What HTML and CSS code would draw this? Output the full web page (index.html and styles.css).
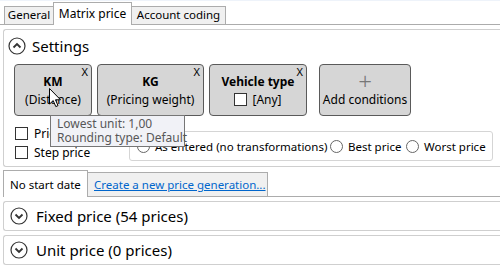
FILE: index.html
```html
<!DOCTYPE html>
<html lang="en">
  <head>
    <meta charset="UTF-8" />
    <meta name="viewport" content="width=device-width, initial-scale=1.0" />
    <title>Matrix price</title>
    <link rel="stylesheet" href="styles.css">
  </head>
  <body>
    <div class="tabs">
      <div class="tab tab-general">General</div>
      <div class="tab tab-active">Matrix price</div>
      <div class="tab tab-account">Account coding</div>
    </div>

    <div class="panel settings">
      <div class="panel-head">
        <svg class="toggle" width="18" height="18" viewBox="0 0 18 18">
          <circle cx="9" cy="9" r="8" fill="none" stroke="#333" stroke-width="1.2" />
          <path d="M5.5 10.5 L9 7 L12.5 10.5" fill="none" stroke="#333" stroke-width="1.8" />
        </svg>
        <span>Settings</span>
      </div>

      <div class="conditions">
        <div class="cond cond-km">
          <span class="cond-x">X</span>
          <b>KM</b>
          <span>(Distance)</span>
        </div>
        <div class="cond cond-kg">
          <span class="cond-x">X</span>
          <b>KG</b>
          <span>(Pricing weight)</span>
        </div>
        <div class="cond cond-vehicle">
          <span class="cond-x">X</span>
          <b>Vehicle type</b>
          <span class="any"><i class="box"></i>[Any]</span>
        </div>
        <div class="cond cond-add">
          <span class="plus">+</span>
          <span>Add conditions</span>
        </div>
      </div>

      <div class="options">
        <div class="checks">
          <label><i class="box"></i>Price per unit</label>
          <label><i class="box"></i>Step price</label>
        </div>
        <div class="radios">
          <label class="r-entered"><i class="radio"></i>As entered (no transformations)</label>
          <label class="r-best"><i class="radio"></i>Best price</label>
          <label><i class="radio"></i>Worst price</label>
        </div>
      </div>
    </div>

    <div class="subtabs">
      <div class="subtab subtab-active">No start date</div>
      <div class="subtab subtab-new"><a href="#">Create a new price generation...</a></div>
    </div>

    <div class="panel section">
      <svg class="toggle" width="18" height="18" viewBox="0 0 18 18">
        <circle cx="9" cy="9" r="8" fill="none" stroke="#333" stroke-width="1.2" />
        <path d="M5.5 7.5 L9 11 L12.5 7.5" fill="none" stroke="#333" stroke-width="1.8" />
      </svg>
      <span>Fixed price (54 prices)</span>
    </div>
    <div class="panel section">
      <svg class="toggle" width="18" height="18" viewBox="0 0 18 18">
        <circle cx="9" cy="9" r="8" fill="none" stroke="#333" stroke-width="1.2" />
        <path d="M5.5 7.5 L9 11 L12.5 7.5" fill="none" stroke="#333" stroke-width="1.8" />
      </svg>
      <span>Unit price (0 prices)</span>
    </div>

    <!-- hover tooltip over the KM condition -->
    <div class="tooltip">
      Lowest unit: 1,00<br />
      Rounding type: Default
    </div>
    <svg class="cursor" width="13" height="20" viewBox="0 0 13 20">
      <path d="M0.5 0.5 L0.5 16 L4.2 12.6 L6.8 18.6 L9 17.6 L6.5 11.8 L11.5 11.8 Z" fill="#fff" stroke="#000" stroke-width="1" stroke-linejoin="round" />
    </svg>
  </body>
</html>
```

FILE: styles.css
```css
body {
  margin: 0;
  background-color: white;
  color: black;
  font-family: "Noto Sans", "Open Sans", sans-serif;
  font-size: 11.5px;
  white-space: nowrap;
  overflow: hidden;
  position: relative;
  height: 267px;
}
.tabs {
  display: flex;
  align-items: flex-end;
  padding-left: 5px;
  border-bottom: 1px solid #acacac;
  border-top: 1px solid #eef3fa;
  box-sizing: border-box;
  height: 25px;
}
.tab {
  height: 17px;
  line-height: 16px;
  text-align: center;
  background-color: #f0f0f0;
  border: 1px solid #acacac;
  border-bottom: none;
  margin-left: -1px;
}
.tab-general { width: 48px; }
.tab-account { width: 93px; }
.tab-active {
  width: 77px;
  height: 22px;
  line-height: 21px;
  background-color: white;
  margin-bottom: -1px;
  font-size: 12px;
}
.panel {
  margin-left: 3px;
  border: 1px solid #cfcfcf;
  border-right: none;
  border-radius: 3px 0 0 3px;
}
.settings {
  margin-top: 4px;
  height: 136px;
}
.panel-head {
  display: flex;
  align-items: center;
  gap: 6px;
  height: 32px;
  padding-left: 4px;
  font-size: 15px;
}
.toggle {
  flex: none;
}
.conditions {
  display: flex;
  gap: 5px;
  padding-left: 10px;
  margin-top: 2px;
}
.cond {
  position: relative;
  display: flex;
  flex-direction: column;
  align-items: center;
  justify-content: center;
  height: 49px;
  padding-top: 1px;
  background-color: #d6d6d6;
  border: 1px solid #5a5a5a;
  border-radius: 4px;
  line-height: 18px;
  font-size: 12px;
}
.cond b {
  font-weight: 700;
}
.cond-km { width: 76px; }
.cond-kg { width: 105px; }
.cond-vehicle { width: 96px; }
.cond-add {
  width: 90px;
  margin-left: 7px;
}
.cond-x {
  position: absolute;
  top: 0;
  right: 3px;
  font-size: 11px;
  line-height: 13px;
}
.plus {
  font-size: 24px;
  line-height: 16px;
  margin-bottom: 2px;
  color: #777;
  font-weight: 300;
}
.any {
  display: flex;
  align-items: center;
  gap: 5px;
}
.box {
  display: inline-block;
  width: 11px;
  height: 11px;
  border: 1px solid #333;
  background-color: white;
}
.options {
  display: flex;
  margin-top: 10px;
}
.checks {
  display: flex;
  flex-direction: column;
  gap: 5px;
  padding-left: 11px;
  width: 114px;
  font-size: 12px;
}
.checks label {
  display: flex;
  align-items: center;
  gap: 6px;
  height: 14px;
}
.radios {
  display: flex;
  align-items: center;
  height: 28px;
  width: 355px;
  margin-top: 5px;
  padding-left: 7px;
  border: 1px solid #d5d5d5;
  border-radius: 3px;
}
.radios label {
  display: flex;
  align-items: center;
  gap: 5px;
}
.r-entered { width: 193px; }
.r-best { width: 76px; }
.radio {
  display: inline-block;
  width: 11px;
  height: 11px;
  border: 1px solid #666;
  border-radius: 50%;
  background-color: white;
}
.subtabs {
  display: flex;
  align-items: flex-end;
  margin-top: 3px;
  margin-left: 3px;
  height: 27px;
  border-bottom: 1px solid #acacac;
  box-sizing: border-box;
}
.subtab {
  height: 24px;
  line-height: 23px;
  padding: 0 6px;
  background-color: #f0f0f0;
  border: 1px solid #acacac;
  border-bottom: none;
  margin-left: -1px;
  box-sizing: border-box;
}
.subtab-active {
  width: 85px;
  height: 27px;
  line-height: 27px;
  margin-left: 0;
  margin-bottom: -1px;
  background-color: white;
}
.subtab-new {
  width: 181px;
}
.subtab a {
  color: #0066cc;
}
.section {
  display: flex;
  align-items: center;
  gap: 8px;
  height: 28px;
  margin-top: 4px;
  padding-left: 6px;
  font-size: 15px;
}
.tooltip {
  position: absolute;
  left: 50px;
  top: 115px;
  width: 121px;
  height: 28px;
  padding: 1px 6px 1px;
  background-color: #f1f2f7;
  border: 1px solid #767676;
  color: #575757;
  line-height: 14px;
  font-size: 12px;
}
.cursor {
  position: absolute;
  left: 49px;
  top: 88px;
}
```
